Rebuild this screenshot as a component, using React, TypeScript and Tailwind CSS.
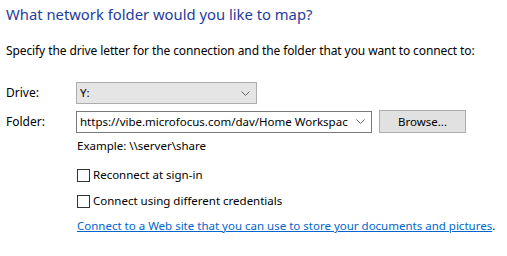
export default function App() {
  return (
    <div className="h-[256px] w-[507px] bg-white font-['Noto_Sans',sans-serif] text-[11.5px] text-black">
      <div className="pl-[6px] pt-[3px] text-[14.8px] leading-[22px] text-[#1e3c9e]">
        What network folder would you like to map?
      </div>
      <div className="mt-[18px] pl-[6px] text-[12px] leading-[16px] tracking-[-0.1px]">
        Specify the drive letter for the connection and the folder that you want to connect to:
      </div>

      <div className="mt-[23px] flex items-center">
        <div className="w-[76px] pl-[6px] text-[12px]">Drive:</div>
        <div className="flex h-[22px] w-[181px] items-center justify-between border border-[#adadad] bg-[#e5e5e5] pl-[3px] pr-[6px]">
          <span>Y:</span>
          <svg width="9" height="5" viewBox="0 0 9 5">
            <path d="M0.5 0.5 L4.5 4.5 L8.5 0.5" fill="none" stroke="#666" strokeWidth="1" />
          </svg>
        </div>
      </div>

      <div className="mt-[6px] flex items-center">
        <div className="w-[76px] pl-[6px] text-[12px]">Folder:</div>
        <div className="flex h-[22px] w-[296px] items-center justify-between border border-[#7a7a7a] bg-white pl-[3px] pr-[6px]">
          <span className="overflow-hidden whitespace-nowrap">https://vibe.microfocus.com/dav/Home Workspac</span>
          <svg width="9" height="5" viewBox="0 0 9 5" className="ml-[4px] shrink-0">
            <path d="M0.5 0.5 L4.5 4.5 L8.5 0.5" fill="none" stroke="#666" strokeWidth="1" />
          </svg>
        </div>
        <button className="ml-[7px] h-[23px] w-[87px] border border-[#adadad] bg-[#e1e1e1]">Browse...</button>
      </div>

      <div className="ml-[77px] mt-[5px] flex flex-col leading-[16px]">
        <div>Example: \\server\share</div>
        <label className="mt-[13px] flex items-center gap-[3px]">
          <span className="h-[13px] w-[13px] border border-[#333] bg-white" />
          <span>Reconnect at sign-in</span>
        </label>
        <label className="mt-[10px] flex items-center gap-[3px]">
          <span className="h-[13px] w-[13px] border border-[#333] bg-white" />
          <span>Connect using different credentials</span>
        </label>
        <div className="mt-[9px] whitespace-nowrap">
          <a className="text-[#0066cc] underline">
            Connect to a Web site that you can use to store your documents and pictures
          </a>
          .
        </div>
      </div>
    </div>
  );
}
